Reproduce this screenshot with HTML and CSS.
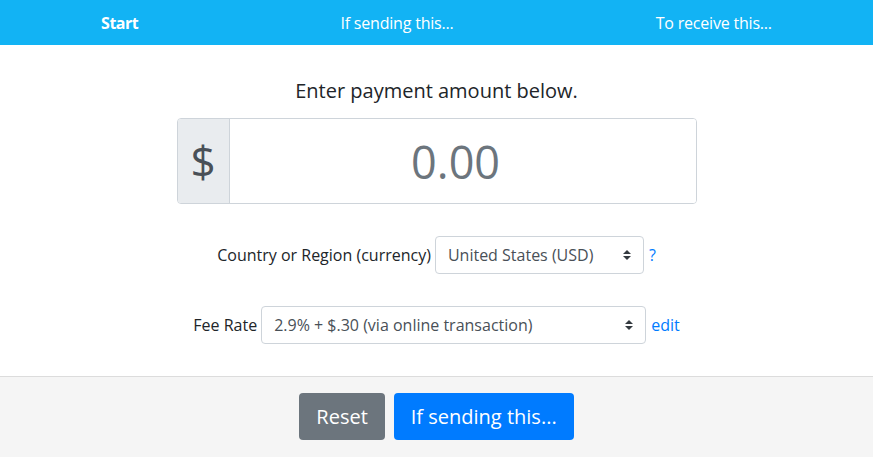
FILE: index.html
```html
<!DOCTYPE html>
<html lang="en">

<head>
    <meta charset="UTF-8">
    <meta name="viewport" content="width=device-width, initial-scale=1.0">
    <title>Payment Fee Calculator</title>
    <link rel="stylesheet" href="styles.css">
</head>

<body>
    <nav class="steps">
        <a href="#start" class="step active">Start</a>
        <a href="#sending" class="step">If sending this...</a>
        <a href="#receive" class="step">To receive this...</a>
    </nav>

    <main class="panel">
        <p class="lead">Enter payment amount below.</p>

        <div class="amount-group">
            <span class="amount-prefix">$</span>
            <input class="amount-input" type="text" placeholder="0.00">
        </div>

        <div class="field-row">
            <label for="country">Country or Region (currency)</label>
            <select id="country" class="select select-country">
                <option>United States (USD)</option>
            </select>
            <a href="#help" class="link">?</a>
        </div>

        <div class="field-row">
            <label for="fee">Fee Rate</label>
            <select id="fee" class="select select-fee">
                <option>2.9% + $.30 (via online transaction)</option>
            </select>
            <a href="#edit" class="link">edit</a>
        </div>
    </main>

    <footer class="actions">
        <button class="btn btn-secondary">Reset</button>
        <button class="btn btn-primary">If sending this...</button>
    </footer>
</body>

</html>
```

FILE: styles.css
```css
body {
    font-family: 'Open Sans', sans-serif;
    color: #212529;
    margin: 0;
    background-color: #fff;
}

.steps {
    display: flex;
    justify-content: space-around;
    align-items: center;
    height: 45px;
    background-color: #12b3f4;
}

.step {
    color: #fff;
    text-decoration: none;
    font-size: 16px;
    letter-spacing: -0.2px;
}

.step.active {
    font-weight: 700;
    letter-spacing: -0.5px;
}

.panel {
    display: flex;
    flex-direction: column;
    align-items: center;
    padding: 32px 0 32px;
}

.lead {
    font-size: 20px;
    line-height: 27px;
    margin: 0 0 14px;
    color: #212529;
}

.amount-group {
    display: flex;
    width: 520px;
    height: 86px;
    border: 1px solid #ced4da;
    border-radius: 4px;
    box-sizing: border-box;
    overflow: hidden;
    margin-bottom: 32px;
}

.amount-prefix {
    display: flex;
    align-items: center;
    padding: 0 13px 0 13px;
    font-size: 44px;
    color: #495057;
    background-color: #e9ecef;
    border-right: 1px solid #ced4da;
}

.amount-input {
    flex: 1;
    min-width: 0;
    border: none;
    outline: none;
    text-align: center;
    font-family: 'Open Sans', sans-serif;
    font-size: 45px;
    color: #495057;
    padding: 0 14px 0 0;
}

.amount-input::placeholder {
    color: #6c757d;
}

.field-row {
    display: flex;
    align-items: center;
    gap: 4px;
    font-size: 16px;
    margin-bottom: 32px;
}

.field-row:last-child {
    margin-bottom: 0;
}

.select {
    appearance: none;
    -webkit-appearance: none;
    height: 38px;
    padding: 0 28px 0 12px;
    font-family: 'Open Sans', sans-serif;
    font-size: 16px;
    color: #495057;
    background: #fff url("data:image/svg+xml,%3csvg xmlns='http://www.w3.org/2000/svg' width='4' height='5' viewBox='0 0 4 5'%3e%3cpath fill='%23343a40' d='M2 0L0 2h4zm0 5L0 3h4z'/%3e%3c/svg%3e") no-repeat right 12px center / 8px 10px;
    border: 1px solid #ced4da;
    border-radius: 4px;
}

.select-country {
    width: 209px;
}

.select-fee {
    width: 385px;
}

.link {
    color: #007bff;
    text-decoration: none;
    margin-left: 1px;
}

.actions {
    display: flex;
    justify-content: center;
    gap: 9px;
    padding: 16px 0 17px;
    background-color: #f5f5f5;
    border-top: 1px solid #dcdcdc;
}

.btn {
    font-family: 'Open Sans', sans-serif;
    font-size: 20px;
    line-height: 31px;
    padding: 8px 17px;
    color: #fff;
    border: none;
    border-radius: 4px;
}

.btn-secondary {
    background-color: #6c757d;
}

.btn-primary {
    background-color: #007bff;
}
```
